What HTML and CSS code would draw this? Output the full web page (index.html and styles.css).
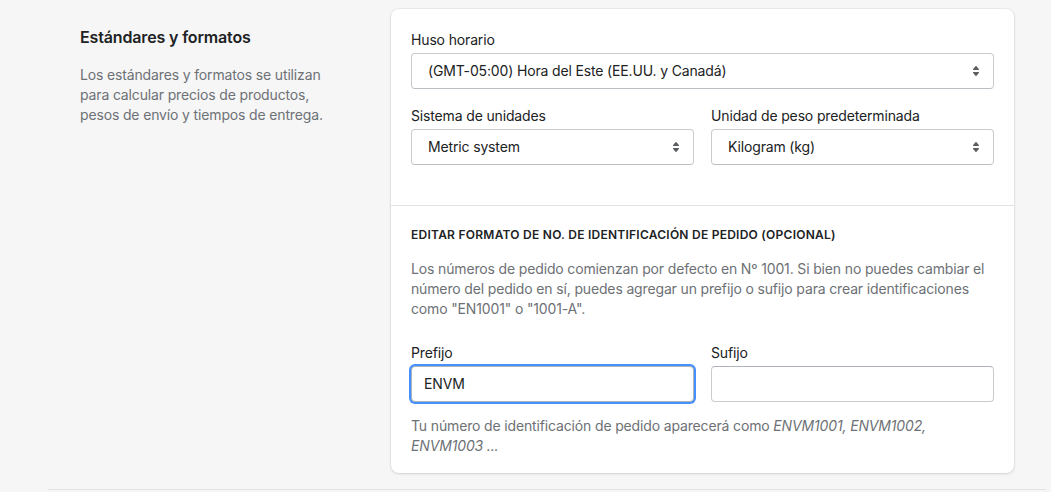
FILE: index.html
```html
<!DOCTYPE html>
<html lang="es">
<head>
<meta charset="utf-8">
<title>Estándares y formatos</title>
<link rel="stylesheet" href="styles.css">
</head>
<body>
<div class="page">
  <div class="layout">
    <div class="annotation">
      <h2 class="annotation-title">Estándares y formatos</h2>
      <p class="annotation-desc">Los estándares y formatos se utilizan para calcular precios de productos, pesos de envío y tiempos de entrega.</p>
    </div>
    <div class="card">
      <div class="section section-first">
        <div class="field">
          <label class="label">Huso horario</label>
          <div class="select">
            <span class="select-text">(GMT-05:00) Hora del Este (EE.UU. y Canadá)</span>
            <svg class="select-icon" viewBox="0 0 20 20" width="20" height="20"><path d="M7.676 9h4.648c.563 0 .879-.603.53-1.014l-2.323-2.746a.708.708 0 0 0-1.062 0l-2.324 2.746c-.347.411-.032 1.014.531 1.014zm4.648 2h-4.648c-.563 0-.878.603-.53 1.014l2.323 2.746c.27.32.792.32 1.062 0l2.323-2.746c.349-.411.033-1.014-.53-1.014z"/></svg>
          </div>
        </div>
        <div class="row">
          <div class="field">
            <label class="label">Sistema de unidades</label>
            <div class="select">
              <span class="select-text">Metric system</span>
              <svg class="select-icon" viewBox="0 0 20 20" width="20" height="20"><path d="M7.676 9h4.648c.563 0 .879-.603.53-1.014l-2.323-2.746a.708.708 0 0 0-1.062 0l-2.324 2.746c-.347.411-.032 1.014.531 1.014zm4.648 2h-4.648c-.563 0-.878.603-.53 1.014l2.323 2.746c.27.32.792.32 1.062 0l2.323-2.746c.349-.411.033-1.014-.53-1.014z"/></svg>
            </div>
          </div>
          <div class="field">
            <label class="label">Unidad de peso predeterminada</label>
            <div class="select">
              <span class="select-text">Kilogram (kg)</span>
              <svg class="select-icon" viewBox="0 0 20 20" width="20" height="20"><path d="M7.676 9h4.648c.563 0 .879-.603.53-1.014l-2.323-2.746a.708.708 0 0 0-1.062 0l-2.324 2.746c-.347.411-.032 1.014.531 1.014zm4.648 2h-4.648c-.563 0-.878.603-.53 1.014l2.323 2.746c.27.32.792.32 1.062 0l2.323-2.746c.349-.411.033-1.014-.53-1.014z"/></svg>
            </div>
          </div>
        </div>
      </div>
      <div class="section section-second">
        <h3 class="subheading">Editar formato de No. de identificación de pedido (opcional)</h3>
        <p class="section-text">Los números de pedido comienzan por defecto en Nº 1001. Si bien no puedes cambiar el número del pedido en sí, puedes agregar un prefijo o sufijo para crear identificaciones como "EN1001" o "1001-A".</p>
        <div class="row row-inputs">
          <div class="field">
            <label class="label">Prefijo</label>
            <div class="input input-focused">ENVM</div>
          </div>
          <div class="field">
            <label class="label">Sufijo</label>
            <div class="input"></div>
          </div>
        </div>
        <p class="help">Tu número de identificación de pedido aparecerá como <em>ENVM1001, ENVM1002, ENVM1003 ...</em></p>
      </div>
    </div>
  </div>
</div>
</body>
</html>
```

FILE: styles.css
```css
* { box-sizing: border-box; }
html, body {
  margin: 0;
  padding: 0;
  background: #f6f6f7;
  font-family: Inter, "Noto Sans", "Liberation Sans", sans-serif;
  color: #202223;
  font-size: 14px;
  line-height: 20px;
  letter-spacing: -0.15px;
}
.page {
  margin: 0 5px 0 48px;
  border-bottom: 1px solid #e1e3e5;
}
.layout {
  display: grid;
  grid-template-columns: 291px 623px;
  column-gap: 20px;
  padding: 9px 32px 16px 32px;
}
.annotation { padding-top: 16px; }
.annotation-title {
  margin: 0;
  font-size: 16px;
  line-height: 24px;
  font-weight: 600;
  color: #202223;
}
.annotation-desc {
  margin: 16px 0 0;
  max-width: 252px;
  color: #6d7175;
  font-size: 14px;
  line-height: 20px;
}
.card {
  background: #fff;
  border-radius: 8px;
  box-shadow: 0 0 0 1px rgba(63,63,68,.05), 0 1px 3px 0 rgba(63,63,68,.15);
}
.section { padding: 20px; }
.section-first { padding-bottom: 40px; padding-top: 21px; }
.section-second {
  border-top: 1px solid #e1e3e5;
  padding-bottom: 17px;
}
.field { display: flex; flex-direction: column; min-width: 0; }
.label {
  display: block;
  margin-bottom: 3px;
  color: #202223;
}
.row {
  display: grid;
  grid-template-columns: 1fr 1fr;
  column-gap: 17px;
  margin-top: 17px;
}
.row-inputs { margin-top: 24px; }
.select, .input {
  height: 36px;
  border: 1px solid #c9cccf;
  border-top-color: #aeb4b9;
  border-radius: 4px;
  background: #fff;
  display: flex;
  align-items: center;
}
.select {
  padding: 0 7px 0 16px;
  justify-content: space-between;
  border-color: #c9cccf;
  border-bottom-color: #babfc3;
}
.select-text {
  white-space: nowrap;
  color: #202223;
}
.select-icon { fill: #5c5f62; flex: none; }
.input { padding: 0 12px; }
.input-focused {
  box-shadow: 0 0 0 2px #458fff;
  border-color: #aeb4b9;
}
.subheading {
  margin: 0;
  font-size: 12px;
  line-height: 16px;
  font-weight: 600;
  letter-spacing: 0.25px;
  text-transform: uppercase;
  color: #202223;
  padding-top: 1px;
}
.section-text {
  margin: 16px 0 0;
  color: #6d7175;
}
.help {
  margin: 14px 0 0;
  color: #6d7175;
}
.help em { font-style: italic; }
```
